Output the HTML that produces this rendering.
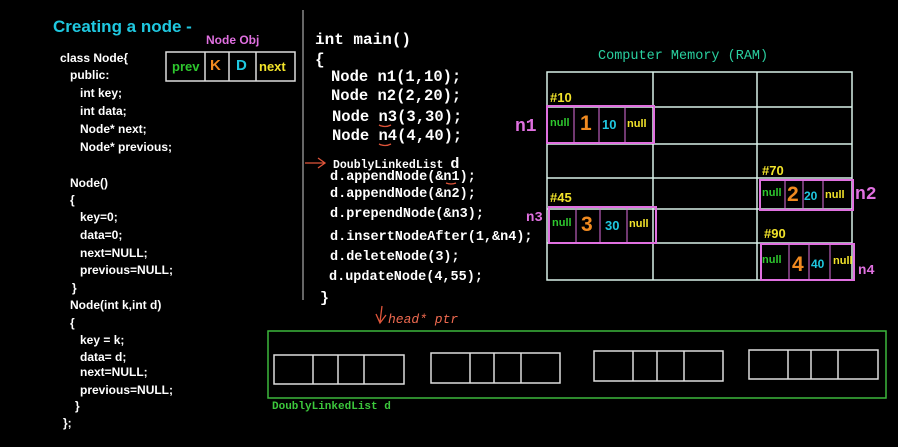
<!DOCTYPE html>
<html><head><meta charset="utf-8"><style>
body{margin:0;background:#000;width:898px;height:447px;overflow:hidden;position:relative;font-family:"Liberation Sans",sans-serif}
.t{position:absolute;white-space:pre;line-height:1}
.l{color:#fff;font-size:12px;font-weight:bold}
.m{font-family:"Liberation Mono",monospace;color:#fff;font-weight:bold}
.y{color:#f2e32a;font-weight:bold}
.p{color:#e070e0;font-family:"Liberation Mono",monospace;font-weight:bold}
svg{position:absolute;left:0;top:0}
</style></head><body>
<svg width="898" height="447">
<line x1="303" y1="10" x2="303" y2="300" stroke="#888" stroke-width="1.5"/>
<g fill="none" stroke="#ddd" stroke-width="1.5">
<rect x="166" y="52" width="129" height="29"/>
<line x1="205" y1="52" x2="205" y2="81"/><line x1="229" y1="52" x2="229" y2="81"/><line x1="256" y1="52" x2="256" y2="81"/>
</g>
<g fill="none" stroke="#d8f0e8" stroke-width="1.5">
<rect x="547" y="72" width="305" height="208"/>
<line x1="653" y1="72" x2="653" y2="280"/><line x1="757" y1="72" x2="757" y2="280"/>
<line x1="547" y1="107" x2="852" y2="107"/><line x1="547" y1="144" x2="852" y2="144"/>
<line x1="547" y1="178" x2="852" y2="178"/><line x1="547" y1="209" x2="852" y2="209"/>
<line x1="547" y1="243" x2="852" y2="243"/>
</g>
<g fill="none" stroke="#e070e0" stroke-width="2">
<rect x="547" y="106" width="107" height="37"/><line x1="574" y1="106" x2="574" y2="143" stroke-width="1"/><line x1="599" y1="106" x2="599" y2="143" stroke-width="1"/><line x1="625" y1="106" x2="625" y2="143" stroke-width="1"/>
<rect x="760" y="180" width="93" height="30"/><line x1="785" y1="180" x2="785" y2="210" stroke-width="1"/><line x1="803" y1="180" x2="803" y2="210" stroke-width="1"/><line x1="823" y1="180" x2="823" y2="210" stroke-width="1"/>
<rect x="549" y="207" width="107" height="36"/><line x1="576" y1="207" x2="576" y2="243" stroke-width="1"/><line x1="600" y1="207" x2="600" y2="243" stroke-width="1"/><line x1="627" y1="207" x2="627" y2="243" stroke-width="1"/>
<rect x="761" y="244" width="93" height="36"/><line x1="789" y1="244" x2="789" y2="280" stroke-width="1"/><line x1="809" y1="244" x2="809" y2="280" stroke-width="1"/><line x1="830" y1="244" x2="830" y2="280" stroke-width="1"/>
</g>
<rect x="268" y="331" width="618" height="67" fill="none" stroke="#3cb83c" stroke-width="1.5"/>
<g fill="none" stroke="#ddd" stroke-width="1.5">
<rect x="274" y="355" width="130" height="29"/><line x1="313" y1="355" x2="313" y2="384"/><line x1="338" y1="355" x2="338" y2="384"/><line x1="364" y1="355" x2="364" y2="384"/>
<rect x="431" y="353" width="129" height="30"/><line x1="470" y1="353" x2="470" y2="383"/><line x1="494" y1="353" x2="494" y2="383"/><line x1="521" y1="353" x2="521" y2="383"/>
<rect x="594" y="351" width="129" height="30"/><line x1="633" y1="351" x2="633" y2="381"/><line x1="657" y1="351" x2="657" y2="381"/><line x1="684" y1="351" x2="684" y2="381"/>
<rect x="749" y="350" width="129" height="29"/><line x1="788" y1="350" x2="788" y2="379"/><line x1="811" y1="350" x2="811" y2="379"/><line x1="838" y1="350" x2="838" y2="379"/>
</g>
<g stroke="#e0553a" stroke-width="1.3" fill="none">
<path d="M305 163 L324 163 M318 158 L325 163 L318 168"/>
<path d="M382 306 L380 322 M376 314 L380 323 L386 315"/>
<path d="M379 125 q6 3 12 0"/><path d="M379 144 q6 3 12 0"/><path d="M446 183 q5 2 10 0"/>
</g>
</svg>
<div class="t" style="left:53px;top:18px;color:#1fc8e0;font-size:17px;font-weight:bold">Creating a node -</div>
<div class="t" style="left:206px;top:34px;color:#e070e0;font-size:12px;font-weight:bold">Node Obj</div>
<div class="t" style="left:172px;top:60px;color:#2ec82e;font-size:13px;font-weight:bold">prev</div>
<div class="t" style="left:210px;top:58px;color:#f08a20;font-size:15px;font-weight:bold">K</div>
<div class="t" style="left:236px;top:58px;color:#1fc8e0;font-size:15px;font-weight:bold">D</div>
<div class="t" style="left:259px;top:60px;color:#f2e32a;font-size:13px;font-weight:bold">next</div>
<div class="t l" style="left:60px;top:52px">class Node{</div>
<div class="t l" style="left:70px;top:69px">public:</div>
<div class="t l" style="left:80px;top:87px">int key;</div>
<div class="t l" style="left:80px;top:105px">int data;</div>
<div class="t l" style="left:80px;top:123px">Node* next;</div>
<div class="t l" style="left:80px;top:141px">Node* previous;</div>
<div class="t l" style="left:70px;top:177px">Node()</div>
<div class="t l" style="left:70px;top:194px">{</div>
<div class="t l" style="left:80px;top:211px">key=0;</div>
<div class="t l" style="left:80px;top:229px">data=0;</div>
<div class="t l" style="left:80px;top:247px">next=NULL;</div>
<div class="t l" style="left:80px;top:264px">previous=NULL;</div>
<div class="t l" style="left:72px;top:282px">}</div>
<div class="t l" style="left:70px;top:299px">Node(int k,int d)</div>
<div class="t l" style="left:70px;top:317px">{</div>
<div class="t l" style="left:80px;top:334px">key = k;</div>
<div class="t l" style="left:80px;top:351px">data= d;</div>
<div class="t l" style="left:80px;top:366px">next=NULL;</div>
<div class="t l" style="left:80px;top:384px">previous=NULL;</div>
<div class="t l" style="left:75px;top:400px">}</div>
<div class="t l" style="left:63px;top:417px">};</div>

<div class="t m" style="left:315px;top:32px;font-size:16px">int main()</div>
<div class="t m" style="left:315px;top:52px;font-size:16px">{</div>
<div class="t m" style="left:331px;top:70px;font-size:15.5px">Node n1(1,10);</div>
<div class="t m" style="left:331px;top:89px;font-size:15.5px">Node n2(2,20);</div>
<div class="t m" style="left:332px;top:110px;font-size:15.5px">Node n3(3,30);</div>
<div class="t m" style="left:332px;top:129px;font-size:15.5px">Node n4(4,40);</div>
<div class="t m" style="left:333px;top:157px;font-size:11.5px">DoublyLinkedList <span style="font-size:15px">d</span></div>
<div class="t m" style="left:330px;top:171px;font-size:13.5px">d.appendNode(&amp;n1);</div>
<div class="t m" style="left:330px;top:188px;font-size:13.5px">d.appendNode(&amp;n2);</div>
<div class="t m" style="left:330px;top:208px;font-size:13.5px">d.prependNode(&amp;n3);</div>
<div class="t m" style="left:330px;top:231px;font-size:13.5px">d.insertNodeAfter(1,&amp;n4);</div>
<div class="t m" style="left:330px;top:251px;font-size:13.5px">d.deleteNode(3);</div>
<div class="t m" style="left:329px;top:271px;font-size:13.5px">d.updateNode(4,55);</div>
<div class="t m" style="left:320px;top:291px;font-size:15px">}</div>

<div class="t" style="left:598px;top:50px;color:#2ad0a0;font-family:'Liberation Mono',monospace;font-size:13.5px">Computer Memory (RAM)</div>
<div class="t y" style="left:550px;top:91px;font-size:13px">#10</div>
<div class="t y" style="left:762px;top:164px;font-size:13px">#70</div>
<div class="t y" style="left:550px;top:191px;font-size:13px">#45</div>
<div class="t y" style="left:764px;top:227px;font-size:13px">#90</div>
<div class="t p" style="left:515px;top:118px;font-size:18px">n1</div>
<div class="t p" style="left:855px;top:186px;font-size:18px">n2</div>
<div class="t p" style="left:526px;top:211px;font-size:14px">n3</div>
<div class="t p" style="left:858px;top:264px;font-size:14px">n4</div>

<div class="t" style="left:550px;top:118px;color:#2ec82e;font-size:11px;font-weight:bold">null</div>
<div class="t" style="left:580px;top:113px;color:#f08a20;font-size:21px;font-weight:bold">1</div>
<div class="t" style="left:602px;top:118px;color:#1fc8e0;font-size:13px;font-weight:bold">10</div>
<div class="t" style="left:627px;top:119px;color:#f2e32a;font-size:11px;font-weight:bold">null</div>

<div class="t" style="left:762px;top:188px;color:#2ec82e;font-size:11px;font-weight:bold">null</div>
<div class="t" style="left:787px;top:184px;color:#f08a20;font-size:21px;font-weight:bold">2</div>
<div class="t" style="left:804px;top:190px;color:#1fc8e0;font-size:12px;font-weight:bold">20</div>
<div class="t" style="left:825px;top:190px;color:#f2e32a;font-size:11px;font-weight:bold">null</div>

<div class="t" style="left:552px;top:218px;color:#2ec82e;font-size:11px;font-weight:bold">null</div>
<div class="t" style="left:581px;top:214px;color:#f08a20;font-size:21px;font-weight:bold">3</div>
<div class="t" style="left:605px;top:219px;color:#1fc8e0;font-size:13px;font-weight:bold">30</div>
<div class="t" style="left:629px;top:219px;color:#f2e32a;font-size:11px;font-weight:bold">null</div>

<div class="t" style="left:762px;top:255px;color:#2ec82e;font-size:11px;font-weight:bold">null</div>
<div class="t" style="left:792px;top:254px;color:#f08a20;font-size:21px;font-weight:bold">4</div>
<div class="t" style="left:811px;top:258px;color:#1fc8e0;font-size:12px;font-weight:bold">40</div>
<div class="t" style="left:833px;top:256px;color:#f2e32a;font-size:11px;font-weight:bold">null</div>

<div class="t" style="left:388px;top:313px;color:#f06a50;font-family:'Liberation Mono',monospace;font-style:italic;font-size:13px">head* ptr</div>
<div class="t" style="left:272px;top:402px;color:#3cc83c;font-family:'Liberation Mono',monospace;font-weight:bold;font-size:11px">DoublyLinkedList d</div>
</body></html>
